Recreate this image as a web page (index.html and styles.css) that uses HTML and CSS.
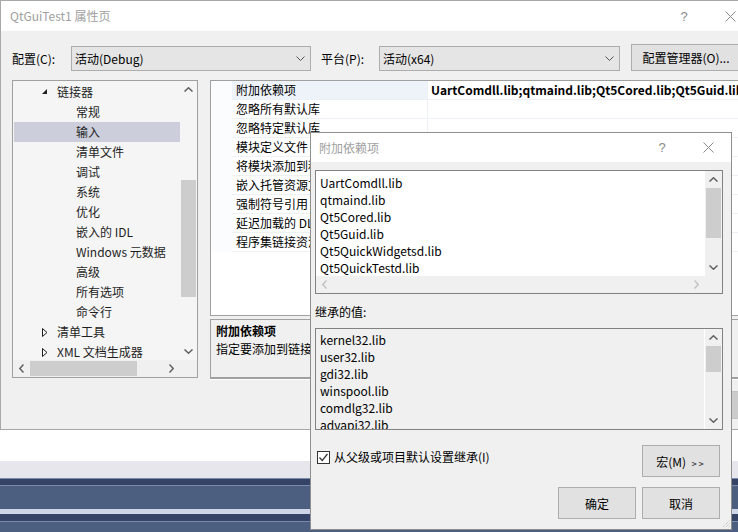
FILE: index.html
```html
<!DOCTYPE html>
<html lang="zh-CN">
<head>
<meta charset="utf-8">
<title>QtGuiTest1 属性页</title>
<link rel="stylesheet" href="styles.css">
</head>
<body>
<div class="window">
  <div class="titlebar">
    <span class="title">QtGuiTest1 属性页</span>
    <span class="cap-btn help">?</span>
    <span class="cap-btn"><svg width="11" height="11" viewBox="0 0 11 11"><path d="M0.5 0.5L10.5 10.5M10.5 0.5L0.5 10.5" stroke="#8a8a8a" stroke-width="1" fill="none"/></svg></span>
  </div>
  <div class="client">
    <div class="config-row">
      <span class="lbl lbl-cfg">配置(C):</span>
      <div class="combo combo-cfg"><span>活动(Debug)</span><svg width="9" height="5" viewBox="0 0 9 5"><path d="M0.5 0.5L4.5 4.5L8.5 0.5" stroke="#555" stroke-width="1" fill="none"/></svg></div>
      <span class="lbl lbl-plat">平台(P):</span>
      <div class="combo combo-plat"><span>活动(x64)</span><svg width="9" height="5" viewBox="0 0 9 5"><path d="M0.5 0.5L4.5 4.5L8.5 0.5" stroke="#555" stroke-width="1" fill="none"/></svg></div>
      <button class="btn btn-cfgmgr">配置管理器(O)...</button>
    </div>
    <div class="main">
      <div class="tree">
        <div class="tree-top">
          <div class="tree-list">
            <div class="trow l1"><svg class="tri" width="6" height="6" viewBox="0 0 6 6"><polygon points="5,0 5,5 0,5" fill="#1e1e1e"/></svg>链接器</div>
            <div class="trow l2">常规</div>
            <div class="trow l2 sel">输入</div>
            <div class="trow l2">清单文件</div>
            <div class="trow l2">调试</div>
            <div class="trow l2">系统</div>
            <div class="trow l2">优化</div>
            <div class="trow l2">嵌入的 IDL</div>
            <div class="trow l2">Windows 元数据</div>
            <div class="trow l2">高级</div>
            <div class="trow l2">所有选项</div>
            <div class="trow l2">命令行</div>
            <div class="trow l1"><svg class="tri" width="6" height="9" viewBox="0 0 6 9"><polygon points="0.5,0.5 5,4.5 0.5,8.5" fill="none" stroke="#1e1e1e" stroke-width="1"/></svg>清单工具</div>
            <div class="trow l1"><svg class="tri" width="6" height="9" viewBox="0 0 6 9"><polygon points="0.5,0.5 5,4.5 0.5,8.5" fill="none" stroke="#1e1e1e" stroke-width="1"/></svg>XML 文档生成器</div>
          </div>
          <div class="vscroll">
            <div class="arrow"><svg width="9" height="5" viewBox="0 0 9 5"><path d="M0.5 4.5L4.5 0.8L8.5 4.5" fill="none" stroke="#606060" stroke-width="1.5"/></svg></div>
            <div class="track"><div class="thumb" style="margin-top:82px;height:117px"></div></div>
            <div class="arrow"><svg width="9" height="5" viewBox="0 0 9 5"><path d="M0.5 0.5L4.5 4.2L8.5 0.5" fill="none" stroke="#606060" stroke-width="1.5"/></svg></div>
          </div>
        </div>
        <div class="hscroll">
          <div class="harrow"><svg width="5" height="9" viewBox="0 0 5 9"><path d="M4.5 0.5L0.8 4.5L4.5 8.5" fill="none" stroke="#606060" stroke-width="1.5"/></svg></div>
          <div class="htrack"><div class="hthumb" style="width:107px"></div></div>
          <div class="harrow"><svg width="5" height="9" viewBox="0 0 5 9"><path d="M0.5 0.5L4.2 4.5L0.5 8.5" fill="none" stroke="#606060" stroke-width="1.5"/></svg></div>
          <div class="corner"></div>
        </div>
      </div>
      <div class="right">
        <div class="grid">
          <div class="grow sel"><span class="gutter"></span><span class="gname">附加依赖项</span><span class="gval">UartComdll.lib;qtmaind.lib;Qt5Cored.lib;Qt5Guid.lib;Qt5QuickWidgetsd.lib</span></div>
          <div class="grow"><span class="gutter"></span><span class="gname">忽略所有默认库</span><span class="gval"></span></div>
          <div class="grow"><span class="gutter"></span><span class="gname">忽略特定默认库</span><span class="gval"></span></div>
          <div class="grow"><span class="gutter"></span><span class="gname">模块定义文件</span><span class="gval"></span></div>
          <div class="grow"><span class="gutter"></span><span class="gname">将模块添加到程序集</span><span class="gval"></span></div>
          <div class="grow"><span class="gutter"></span><span class="gname">嵌入托管资源文件</span><span class="gval"></span></div>
          <div class="grow"><span class="gutter"></span><span class="gname">强制符号引用</span><span class="gval"></span></div>
          <div class="grow"><span class="gutter"></span><span class="gname">延迟加载的 DLL</span><span class="gval"></span></div>
          <div class="grow"><span class="gutter"></span><span class="gname">程序集链接资源</span><span class="gval"></span></div>
        </div>
        <div class="desc">
          <div class="desc-title">附加依赖项</div>
          <div class="desc-text">指定要添加到链接命令行的附加项。</div>
        </div>
      </div>
    </div>
    <div class="footer">
      <button class="btn fbtn">确定</button>
      <button class="btn fbtn">取消</button>
      <button class="btn fbtn apply">应用(A)</button>
    </div>
  </div>
</div>
<div class="below">
  <div class="white-gap"></div>
  <div class="gray-band"></div>
  <div class="band b-line"></div>
  <div class="band b-dark1"></div>
  <div class="band b-line"></div>
  <div class="band b-mid1"></div>
  <div class="band b-light"></div>
  <div class="band b-dark2"></div>
  <div class="band b-line"></div>
  <div class="band b-mid2"></div>
</div>

<div class="dialog">
  <div class="dlg-title">
    <span class="title">附加依赖项</span>
    <span class="cap-btn help">?</span>
    <span class="cap-btn"><svg width="11" height="11" viewBox="0 0 11 11"><path d="M0.5 0.5L10.5 10.5M10.5 0.5L0.5 10.5" stroke="#8a8a8a" stroke-width="1" fill="none"/></svg></span>
  </div>
  <div class="dlg-body">
    <div class="list list1">
      <div class="list-top">
        <div class="items">
          <div class="item">UartComdll.lib</div>
          <div class="item">qtmaind.lib</div>
          <div class="item">Qt5Cored.lib</div>
          <div class="item">Qt5Guid.lib</div>
          <div class="item">Qt5QuickWidgetsd.lib</div>
          <div class="item">Qt5QuickTestd.lib</div>
        </div>
        <div class="vscroll">
          <div class="arrow"><svg width="9" height="5" viewBox="0 0 9 5"><path d="M0.5 4.5L4.5 0.8L8.5 4.5" fill="none" stroke="#606060" stroke-width="1.5"/></svg></div>
          <div class="track"><div class="thumb" style="margin-top:0;height:50px"></div></div>
          <div class="arrow"><svg width="9" height="5" viewBox="0 0 9 5"><path d="M0.5 0.5L4.5 4.2L8.5 0.5" fill="none" stroke="#606060" stroke-width="1.5"/></svg></div>
        </div>
      </div>
      <div class="hscroll">
        <div class="harrow"><svg width="5" height="9" viewBox="0 0 5 9"><path d="M4.5 0.5L0.8 4.5L4.5 8.5" fill="none" stroke="#c2c2c2" stroke-width="1.5"/></svg></div>
        <div class="htrack"></div>
        <div class="harrow"><svg width="5" height="9" viewBox="0 0 5 9"><path d="M0.5 0.5L4.2 4.5L0.5 8.5" fill="none" stroke="#c2c2c2" stroke-width="1.5"/></svg></div>
        <div class="corner"></div>
      </div>
    </div>
    <div class="inh-label">继承的值:</div>
    <div class="list list2">
      <div class="items">
        <div class="item">kernel32.lib</div>
        <div class="item">user32.lib</div>
        <div class="item">gdi32.lib</div>
        <div class="item">winspool.lib</div>
        <div class="item">comdlg32.lib</div>
        <div class="item">advapi32.lib</div>
      </div>
      <div class="vscroll">
        <div class="arrow"><svg width="9" height="5" viewBox="0 0 9 5"><path d="M0.5 4.5L4.5 0.8L8.5 4.5" fill="none" stroke="#606060" stroke-width="1.5"/></svg></div>
        <div class="track"><div class="thumb" style="margin-top:0;height:26px"></div></div>
        <div class="arrow"><svg width="9" height="5" viewBox="0 0 9 5"><path d="M0.5 0.5L4.5 4.2L8.5 0.5" fill="none" stroke="#606060" stroke-width="1.5"/></svg></div>
      </div>
    </div>
    <div class="dlg-row1">
      <label class="check"><span class="box"><svg width="11" height="11" viewBox="0 0 11 11"><path d="M1.5 5.5L4.2 8.5L9.5 2" fill="none" stroke="#333" stroke-width="1.2"/></svg></span>从父级或项目默认设置继承(I)</label>
      <button class="btn dbtn">宏(M) <span class="gg">&gt;&gt;</span></button>
    </div>
    <div class="dlg-row2">
      <button class="btn dbtn">确定</button>
      <button class="btn dbtn">取消</button>
    </div>
  </div>
  <svg class="grip" width="9" height="9" viewBox="0 0 9 9"><path d="M8.5 1.5L1.5 8.5M8.5 4.5L4.5 8.5M8.5 7.5L7.5 8.5" stroke="#b8b8b8" stroke-width="1" stroke-dasharray="1 1" fill="none"/></svg>
</div>
</body>
</html>
```

FILE: styles.css
```css
* { box-sizing: border-box; }
html, body { margin: 0; padding: 0; }
body {
  width: 738px;
  height: 532px;
  overflow: hidden;
  position: relative;
  background: #fff;
  font-family: "Noto Sans CJK SC", "Microsoft YaHei", sans-serif;
  font-size: 12px;
  color: #000;
}
button { font-family: inherit; font-size: 12px; color: #000; padding: 0; }

.window {
  width: 760px;
  height: 430px;
  border-top: 1px solid #a8a8a8;
  border-left: 1px solid #a8a8a8;
  border-bottom: 1px solid #a8a8a8;
  background: #f0f0f0;
  display: flex;
  flex-direction: column;
}
.titlebar {
  height: 30px;
  background: #fff;
  display: flex;
  align-items: center;
  padding-left: 9px;
  padding-right: 7px;
  color: #a0a0a0;
  flex: none;
}
.titlebar .title, .dlg-title .title { flex: 1; line-height: 16px; }
.cap-btn {
  width: 46px;
  height: 100%;
  display: flex;
  align-items: center;
  justify-content: center;
  color: #8a8a8a;
}
.cap-btn.help { font-family: "Liberation Sans", sans-serif; font-size: 13px; }

.client { flex: 1; padding: 13px 0 0 11px; }
.config-row { display: flex; align-items: flex-end; height: 27px; }
.lbl { height: 25px; line-height: 25px; flex: none; }
.lbl-cfg { width: 59px; }
.lbl-plat { width: 58px; margin-left: 10px; }
.combo {
  height: 25px;
  border: 1px solid #adadad;
  background: #e5e5e5;
  display: flex;
  align-items: center;
  justify-content: space-between;
  padding: 0 5px 0 3px;
  flex: none;
}
.combo-cfg { width: 240px; }
.combo-plat { width: 241px; }
.btn { background: #e1e1e1; border: 1px solid #adadad; }
.btn-cfgmgr { width: 110px; height: 27px; margin-left: 11px; flex: none; }

.main { display: flex; gap: 12px; margin-top: 9px; }
.tree {
  width: 186px;
  height: 298px;
  border: 1px solid #a0a0a0;
  background: #f5f5f5;
  display: flex;
  flex-direction: column;
  flex: none;
}
.tree-top { display: flex; height: 279px; }
.tree-list { flex: 1; overflow: hidden; padding-top: 1px; padding-left: 1px; }
.trow { height: 20px; line-height: 20px; white-space: nowrap; color: #1e1e1e; display: flex; align-items: center; }
.trow.l1 { padding-left: 28px; }
.trow.l2 { padding-left: 62px; }
.trow.sel { background: #cccedb; }
.tri { margin-right: 10px; flex: none; }
.trow.l1 .tri { width: 6px; margin-right: 9px; }

.vscroll { width: 17px; display: flex; flex-direction: column; background: #f0f0f0; flex: none; }
.tree .vscroll { background: #f5f5f5; }
.arrow { height: 17px; display: flex; align-items: center; justify-content: center; flex: none; }
.track { flex: 1; padding: 0 1px; }
.thumb { background: #cdcdcd; }
.hscroll { height: 17px; display: flex; background: #f0f0f0; flex: none; }
.harrow { width: 17px; display: flex; align-items: center; justify-content: center; flex: none; }
.htrack { flex: 1; padding: 1px 0; display: flex; }
.hthumb { background: #cdcdcd; }
.corner { width: 17px; background: #f0f0f0; flex: none; }

.right { flex: 1; display: flex; flex-direction: column; }
.grid { height: 236px; border: 1px solid #a0a0a0; background: #fff; }
.grow { display: flex; height: 19px; }
.gutter { width: 21px; flex: none; background: #fbfcfd; }
.gname {
  width: 196px;
  flex: none;
  padding-left: 4px;
  line-height: 18px;
  border-bottom: 1px solid #edf0f5;
  border-right: 1px solid #edf0f5;
  white-space: nowrap;
  overflow: hidden;
}
.grow.sel .gname { background: #eef3fa; }
.gval {
  flex: 1;
  padding-left: 3px;
  line-height: 18px;
  border-bottom: 1px solid #edf0f5;
  white-space: nowrap;
  overflow: hidden;
  font-weight: bold;
}
.desc {
  margin-top: 3px;
  height: 60px;
  border: 1px solid #a0a0a0;
  border-bottom-width: 2px;
  box-shadow: 0 1px 0 #fff;
  background: #f0f0f0;
  padding: 2px 0 0 5px;
}
.desc-title { font-weight: bold; line-height: 18px; }
.desc-text { line-height: 18px; white-space: nowrap; }

.footer { margin-top: 12px; display: flex; justify-content: flex-end; gap: 8px; padding-right: 10px; }
.fbtn { width: 88px; height: 28px; }
.fbtn.apply { background: #cccccc; border-color: #c4c4c4; }

.below { display: flex; flex-direction: column; }
.white-gap { height: 31px; background: #fff; }
.gray-band { height: 17px; background: #e6e6ec; }
.band.b-line { height: 1px; background: #7a8aab; }
.band.b-dark1 { height: 6px; background: #354466; }
.band.b-mid1 { height: 23px; background: #4d5f80; }
.band.b-light { height: 5px; background: #cdd5e6; }
.band.b-dark2 { height: 7px; background: #354466; }
.band.b-mid2 { height: 12px; background: #4d5f80; }

.dialog {
  position: absolute;
  left: 310px;
  top: 132px;
  width: 422px;
  height: 398px;
  border: 1px solid #8f8f8f;
  background: #f0f0f0;
  display: flex;
  flex-direction: column;
}
.dlg-title {
  height: 29px;
  background: #fff;
  display: flex;
  align-items: center;
  padding-left: 8px;
  color: #a0a0a0;
  flex: none;
}
.dlg-body { flex: 1; padding: 8px 8px 10px 4px; display: flex; flex-direction: column; }
.list { border: 1px solid #828282; flex: none; }
.list1 { height: 124px; background: #fff; display: flex; flex-direction: column; }
.list-top { display: flex; flex: 1; min-height: 0; }
.items { flex: 1; overflow: hidden; padding: 3px 0 0 4px; }
.item { height: 17px; line-height: 17px; white-space: nowrap; }
.list1 .vscroll { border-left: 1px solid #fff; width: 18px; }
.list2 { height: 102px; margin-top: 6px; display: flex; background: #f0f0f0; }
.list2 .items { padding-top: 2px; }
.list2 .vscroll { border-left: 1px solid #fff; width: 18px; }
.inh-label { margin-top: 8px; height: 20px; line-height: 20px; }
.dlg-row1 { margin-top: 15px; display: flex; justify-content: space-between; align-items: flex-start; margin-right: 3px; }
.check { display: flex; align-items: center; margin-top: 5px; margin-left: 2px; line-height: 14px; }
.box {
  width: 13px;
  height: 13px;
  border: 1px solid #333;
  background: #fff;
  display: flex;
  align-items: center;
  justify-content: center;
  margin-right: 4px;
}
.dbtn { width: 78px; height: 32px; }
.gg { font-size: 9px; letter-spacing: 2px; margin-left: 3px; }
.dlg-row2 { margin-top: 10px; display: flex; justify-content: flex-end; gap: 6px; margin-right: 3px; }
.grip { position: absolute; right: 1px; bottom: 1px; }
```
